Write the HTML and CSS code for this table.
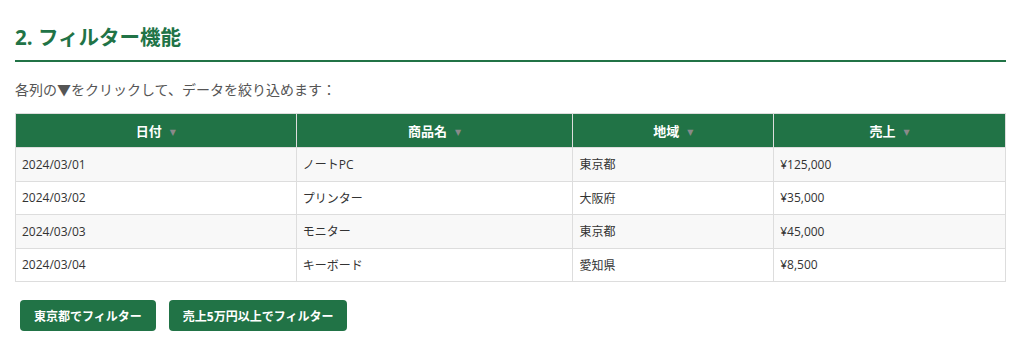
FILE: index.html
```html
<!DOCTYPE html>
<html lang="ja">
<head>
<meta charset="utf-8">
<link rel="stylesheet" href="styles.css">
</head>
<body>
<div class="page">
  <h2 class="title">2. フィルター機能</h2>
  <p class="lead">各列の▼をクリックして、データを絞り込めます：</p>
  <table class="grid">
    <colgroup>
      <col class="c1"><col class="c2"><col class="c3"><col class="c4">
    </colgroup>
    <thead>
      <tr>
        <th>日付<span class="arrow">▼</span></th>
        <th>商品名<span class="arrow">▼</span></th>
        <th>地域<span class="arrow">▼</span></th>
        <th>売上<span class="arrow">▼</span></th>
      </tr>
    </thead>
    <tbody>
      <tr><td>2024/03/01</td><td>ノートPC</td><td>東京都</td><td>¥125,000</td></tr>
      <tr><td>2024/03/02</td><td>プリンター</td><td>大阪府</td><td>¥35,000</td></tr>
      <tr><td>2024/03/03</td><td>モニター</td><td>東京都</td><td>¥45,000</td></tr>
      <tr><td>2024/03/04</td><td>キーボード</td><td>愛知県</td><td>¥8,500</td></tr>
    </tbody>
  </table>
  <div class="actions">
    <button class="btn">東京都でフィルター</button>
    <button class="btn">売上5万円以上でフィルター</button>
  </div>
</div>
</body>
</html>
```
FILE: styles.css
```css
html, body {
  margin: 0;
  padding: 0;
  background: #fff;
}
body {
  font-family: "Open Sans", "Noto Sans CJK JP", sans-serif;
  color: #333;
}
.page {
  padding: 24px 18px 0 15px;
}
.title {
  margin: 0;
  font-size: 20.5px;
  font-weight: 700;
  line-height: 27px;
  color: #217346;
  padding-bottom: 9px;
  border-bottom: 2px solid #217346;
}
.lead {
  margin: 18px 0 0;
  font-size: 14px;
  line-height: 20px;
  color: #555;
}
.grid {
  margin-top: 13px;
  width: 991px;
  border-collapse: collapse;
  font-size: 12px;
}
.c1 { width: 281px; }
.c2 { width: 277px; }
.c3 { width: 201px; }
.c4 { width: 232px; }
.grid th {
  background: #217346;
  color: #fff;
  font-weight: 700;
  font-size: 13px;
  height: 33px;
  padding: 0 8px;
  border: 1px solid #ddd;
  text-align: center;
}
.arrow {
  font-size: 8px;
  color: #8a8a8a;
  margin-left: 8px;
  vertical-align: 1px;
  font-family: "DejaVu Sans", sans-serif;
}
.grid td {
  height: 32.5px;
  padding: 0 6px;
  border: 1px solid #ddd;
  color: #333;
}
.grid tbody tr:nth-child(odd) td {
  background: #f8f8f8;
}
.actions {
  display: flex;
  gap: 13px;
  margin-top: 18px;
  padding-left: 5px;
}
.btn {
  font-family: "Open Sans", "Noto Sans CJK JP", sans-serif;
  font-size: 12px;
  font-weight: 700;
  color: #fff;
  background: #217346;
  border: none;
  border-radius: 4px;
  height: 31px;
  padding: 0 14px;
}
```
